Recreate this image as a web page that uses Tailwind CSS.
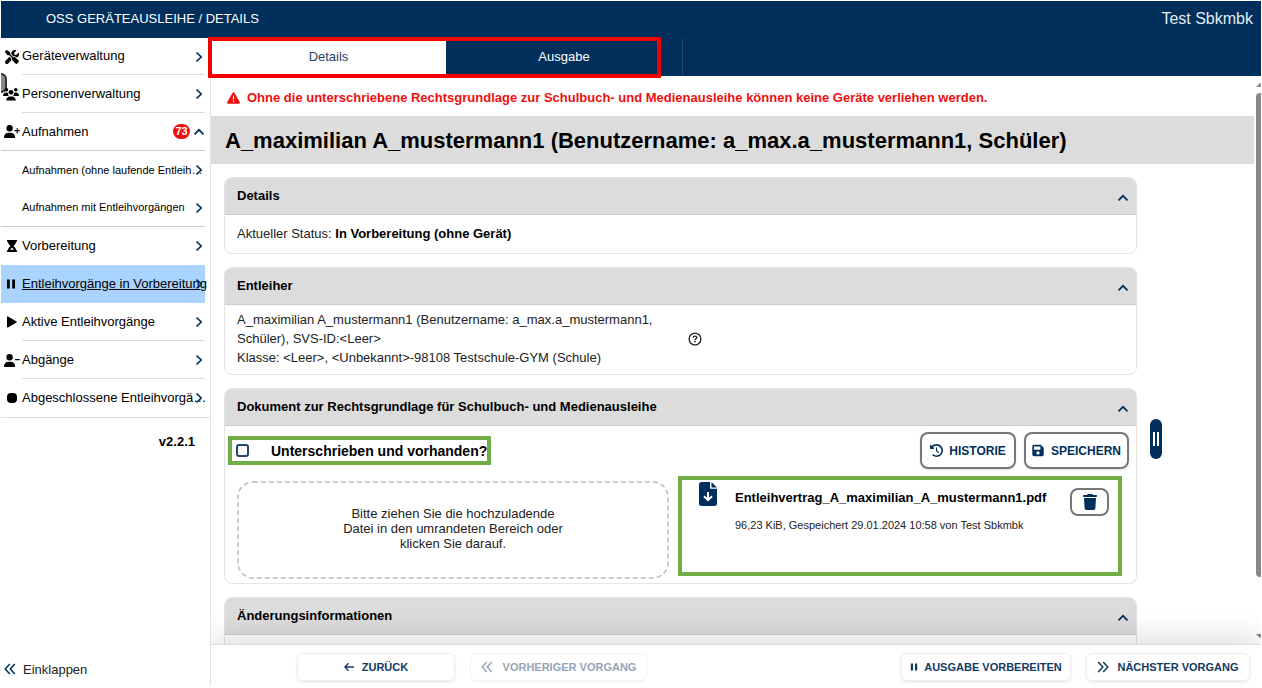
<!DOCTYPE html>
<html lang="de">
<head>
<meta charset="utf-8">
<title>OSS Geräteausleihe / Details</title>
<script src="https://cdn.jsdelivr.net/npm/@tailwindcss/browser@4"></script>
</head>
<body class="h-screen overflow-hidden bg-white px-px pt-px pb-0.5 font-['Liberation_Sans',Arial,sans-serif] text-[13px] text-[#222]">
<svg class="hidden" aria-hidden="true">
  <symbol id="chev-r" viewBox="0 0 12 12"><path d="M3.500 1.500 8.200 6l-4.700 4.500" fill="none" stroke="currentColor" stroke-width="1.700"/></symbol>
  <symbol id="chev-u" viewBox="0 0 12 12"><path d="M1.500 8.300 6 3.800l4.500 4.500" fill="none" stroke="currentColor" stroke-width="1.700"/></symbol>
  <symbol id="dbl-l" viewBox="0 0 12 12"><path d="M5.800 1 1.200 6l4.600 5M10.800 1 6.200 6l4.600 5" fill="none" stroke="currentColor" stroke-width="1.500"/></symbol>
  <symbol id="dbl-r" viewBox="0 0 12 12"><path d="M1.200 1 5.800 6l-4.600 5M6.200 1l4.600 5-4.600 5" fill="none" stroke="currentColor" stroke-width="1.500"/></symbol>
  <symbol id="pause" viewBox="0 0 10 10"><path d="M1 0.500h2.800v9H1zM6.200 0.500H9v9H6.200z" fill="currentColor"/></symbol>
</svg>
<div class="flex h-full flex-col">
  <header class="flex h-[37px] shrink-0 items-center justify-between bg-[#002f5b] pr-2 pb-0.5 pl-[45px] text-white">
    <span>OSS GERÄTEAUSLEIHE / DETAILS</span>
    <span class="text-base text-[#e4ecf4]">Test Sbkmbk</span>
  </header>
  <div class="flex min-h-0 flex-1">
    <aside class="relative flex w-[210px] shrink-0 flex-col border-r border-[#e2e2e2]">
      <span class="absolute top-[35px] left-0 h-5 w-1.5 rounded-r-full border-2 border-l-0 border-[#333] bg-[#888]"></span>
      <nav class="flex flex-col text-black [&>a]:relative [&>a]:flex [&>a]:h-[38px] [&>a]:w-[204px] [&>a]:shrink-0 [&>a]:items-center [&>a:first-child]:h-[37px]">
        <a href="#">
          <svg class="ml-1 size-3.5 shrink-0" viewBox="0 0 512 512"><path d="M78.600 5C69.100-2.400 55.600-1.500 47 7L7 47c-8.500 8.500-9.400 22-2.100 31.600l80 104c4.500 5.900 11.600 9.400 19 9.400h54.100l109 109c-14.700 29-10 65.400 14.300 89.600l112 112c12.500 12.500 32.800 12.500 45.300 0l64-64c12.500-12.500 12.500-32.800 0-45.300l-112-112c-24.200-24.200-60.600-29-89.600-14.300l-109-109V104c0-7.500-3.500-14.500-9.400-19L78.600 5zM19.900 396.100C7.200 408.800 0 426.100 0 444.100C0 481.600 30.400 512 67.900 512c18 0 35.300-7.200 48-19.900L233.700 374.300c-7.800-20.900-9-43.600-3.600-65.100l-61.700-61.700L19.900 396.100zM512 144c0-10.500-1.100-20.700-3.200-30.500c-2.400-11.200-16.100-14.100-24.200-6l-63.900 63.900c-3 3-7.100 4.700-11.300 4.700H352c-8.800 0-16-7.200-16-16V102.600c0-4.200 1.700-8.300 4.700-11.300l63.900-63.900c8.100-8.100 5.200-21.800-6-24.200C388.700 1.100 378.500 0 368 0C288.500 0 224 64.500 224 144l0 .8 85.300 85.300c36-9.100 75.800 .5 104 28.700L429 274.500c49-23 83-72.800 83-130.500z"/></svg>
          <span class="ml-[3px] flex h-full w-[183px] items-center border-b border-[#ddd]">Geräteverwaltung</span>
          <svg class="absolute right-0 size-3 text-[#002f5b]"><use href="#chev-r"/></svg>
        </a>
        <a href="#">
          <svg class="ml-0.5 h-3.5 w-4 shrink-0" viewBox="0 0 16 14"><circle cx="3.500" cy="2.800" r="1.800"/><circle cx="12.800" cy="2.800" r="1.800"/><circle cx="8" cy="5.300" r="2.400"/><path d="M0 8.800c0-2 1.500-3.300 3.200-3.300 1 0 1.700.300 2 .7-.4 1 .1 2.100.8 2.800H.3zM16 8.800c0-2-1.500-3.300-3.200-3.300-1 0-1.700.3-2 .7.400 1-.1 2.100-.8 2.800h5.700zM3.200 13.600c0-2.600 1.600-4.200 3.600-4.200h2.400c2 0 3.600 1.600 3.600 4.200z"/></svg>
          <span class="ml-[3px] flex h-full w-[183px] items-center border-b border-[#ddd]">Personenverwaltung</span>
          <svg class="absolute right-0 size-3 text-[#002f5b]"><use href="#chev-r"/></svg>
        </a>
        <a href="#" class="border-b border-[#ccc]">
          <svg class="ml-[3px] h-[13px] w-4 shrink-0" viewBox="0 0 640 512"><path d="M96 128a128 128 0 1 1 256 0A128 128 0 1 1 96 128zM0 482.300C0 383.800 79.800 304 178.300 304h91.400C368.200 304 448 383.800 448 482.300c0 16.400-13.300 29.700-29.700 29.700H29.700C13.300 512 0 498.700 0 482.300zM504 312V248H440c-13.300 0-24-10.700-24-24s10.700-24 24-24h64V136c0-13.300 10.700-24 24-24s24 10.700 24 24v64h64c13.300 0 24 10.700 24 24s-10.700 24-24 24H552v64c0 13.300-10.700 24-24 24s-24-10.700-24-24z"/></svg>
          <span class="ml-0.5 flex-1">Aufnahmen</span>
          <span class="mr-[15px] flex h-[15px] w-[17px] items-center justify-center rounded-full bg-[#f20d0d] text-[11px] font-bold text-white">73</span>
          <svg class="absolute right-0 size-3 text-[#002f5b]"><use href="#chev-u"/></svg>
        </a>
        <a href="#">
          <span class="ml-[21px] text-[11px] whitespace-nowrap">Aufnahmen (ohne laufende Entleih…</span>
          <svg class="absolute right-0 size-3 text-[#002f5b]"><use href="#chev-r"/></svg>
        </a>
        <a href="#" class="border-b border-[#ccc]">
          <span class="ml-[21px] text-[11px] whitespace-nowrap">Aufnahmen mit Entleihvorgängen</span>
          <svg class="absolute right-0 size-3 text-[#002f5b]"><use href="#chev-r"/></svg>
        </a>
        <a href="#">
          <svg class="ml-[5px] size-3 shrink-0" viewBox="0 0 12 12"><path d="M1 0h10v1.800H10C10 4 8.500 5 7.400 6 8.500 7 10 8 10 10.200h1V12H1v-1.800h1C2 8 3.500 7 4.600 6 3.500 5 2 4 2 1.800H1z"/><path d="M4 9.800 6 7.500l2 2.300z" fill="#fff"/></svg>
          <span class="ml-1">Vorbereitung</span>
          <svg class="absolute right-0 size-3 text-[#002f5b]"><use href="#chev-r"/></svg>
        </a>
        <a href="#" aria-current="page" class="bg-[#a9d4ff]">
          <svg class="ml-[5px] mr-1.5 size-2.5 shrink-0"><use href="#pause"/></svg>
          <span class="whitespace-nowrap underline">Entleihvorgänge in Vorbereitung</span>
          <svg class="absolute right-0 size-3 text-[#002f5b]"><use href="#chev-r"/></svg>
        </a>
        <a href="#">
          <svg class="ml-[5px] size-3 shrink-0" viewBox="0 0 12 12"><path d="M1 .9C1 .4 1.500.2 2 .5l8.500 5c.5.300.5.700 0 1L2 11.500c-.5.300-1 0-1-.4z"/></svg>
          <span class="ml-1 flex h-full w-[183px] items-center border-b border-[#ddd]">Aktive Entleihvorgänge</span>
          <svg class="absolute right-0 size-3 text-[#002f5b]"><use href="#chev-r"/></svg>
        </a>
        <a href="#">
          <svg class="ml-[3px] h-[13px] w-4 shrink-0" viewBox="0 0 640 512"><path d="M96 128a128 128 0 1 1 256 0A128 128 0 1 1 96 128zM0 482.300C0 383.800 79.800 304 178.300 304h91.400C368.200 304 448 383.800 448 482.300c0 16.400-13.300 29.700-29.700 29.700H29.700C13.300 512 0 498.700 0 482.300zM460 200h150a24 24 0 0 1 0 50H460a24 24 0 0 1 0-50z"/></svg>
          <span class="ml-0.5 flex h-full w-[183px] items-center border-b border-[#ddd]">Abgänge</span>
          <svg class="absolute right-0 size-3 text-[#002f5b]"><use href="#chev-r"/></svg>
        </a>
        <a href="#">
          <span class="ml-1.5 size-2.5 shrink-0 rounded-sm bg-black"></span>
          <span class="ml-[5px] whitespace-nowrap">Abgeschlossene Entleihvorgä…</span>
          <svg class="absolute right-0 size-3 text-[#002f5b]"><use href="#chev-r"/></svg>
        </a>
      </nav>
      <p class="border-t border-[#ddd] pt-3.5 pr-[15px] text-right font-bold text-black">v2.2.1</p>
      <button type="button" class="mt-auto mb-[7px] flex items-center gap-[7px] pl-[3px]"><svg class="size-3 text-[#002f5b]"><use href="#dbl-l"/></svg>Einklappen</button>
    </aside>

    <main class="flex min-w-0 flex-1 flex-col">
      <nav class="relative flex h-[38px] shrink-0 bg-[#002f5b]">
        <a href="#" aria-current="page" class="flex w-[235px] items-center justify-center bg-white text-[#23456b]">Details</a>
        <a href="#" class="flex w-[237px] items-center justify-center border-r border-[#1d4770] text-white">Ausgabe</a>
        <span class="pointer-events-none absolute -top-px -left-[3px] h-[41px] w-[453px] border-4 border-[#f40000]"></span>
      </nav>
      <div class="flex min-h-0 flex-1">
        <div class="min-w-0 flex-1 overflow-hidden">
          <p class="flex h-10 items-center gap-[7px] pt-1 pl-4 font-bold text-[#ee0f0f]">
            <svg class="h-3.5 w-[13px]" viewBox="0 0 512 512" fill="currentColor"><path d="M256 32c14.200 0 27.300 7.500 34.500 19.800l216 368c7.300 12.400 7.300 27.700 .2 40.100S486.300 480 472 480H40c-14.300 0-27.600-7.700-34.700-20.100s-7-27.800 .2-40.100l216-368C228.700 39.500 241.800 32 256 32zm0 128c-13.300 0-24 10.700-24 24V296c0 13.300 10.700 24 24 24s24-10.700 24-24V184c0-13.300-10.700-24-24-24zm32 224a32 32 0 1 0 -64 0 32 32 0 1 0 64 0z"/></svg>
            Ohne die unterschriebene Rechtsgrundlage zur Schulbuch- und Medienausleihe können keine Geräte verliehen werden.
          </p>
          <h1 class="flex h-12 items-center bg-[#dcdcdc] pl-3.5 text-[22px] font-bold whitespace-nowrap text-black">A_maximilian A_mustermann1 (Benutzername: a_max.a_mustermann1, Schüler)</h1>
          <div class="flex gap-[13px] pt-[13px] pl-[13px]">
            <div class="flex min-w-0 flex-1 flex-col gap-[13px]">
              <section class="overflow-hidden rounded-lg border border-[#e3e3e3]">
                <h2 class="flex h-[37px] items-center justify-between border-b border-[#ccc] bg-[#dcdcdc] pr-[7px] pl-3 font-bold text-black">Details <button type="button" aria-label="Details einklappen" class="pt-1 text-[#002f5b]"><svg class="size-3"><use href="#chev-u"/></svg></button></h2>
                <p class="flex h-[38px] items-center pl-3">Aktueller Status:&nbsp;<b class="text-black">In Vorbereitung (ohne Gerät)</b></p>
              </section>
              <section class="overflow-hidden rounded-lg border border-[#e3e3e3]">
                <h2 class="flex h-[37px] items-center justify-between border-b border-[#ccc] bg-[#dcdcdc] pr-[7px] pl-3 font-bold text-black">Entleiher <button type="button" aria-label="Entleiher einklappen" class="pt-1 text-[#002f5b]"><svg class="size-3"><use href="#chev-u"/></svg></button></h2>
                <div class="flex items-center gap-[31px] pt-[5px] pb-[7px] pl-3 leading-[19px]">
                  <p class="w-[420px]">A_maximilian A_mustermann1 (Benutzername: a_max.a_mustermann1, Schüler), SVS-ID:&lt;Leer&gt;<br>Klasse: &lt;Leer&gt;, &lt;Unbekannt&gt;-98108 Testschule-GYM (Schule)</p>
                  <button type="button" aria-label="Hilfe"><svg class="size-3.5" viewBox="0 0 14 14" fill="none" stroke="#222"><circle cx="7" cy="7" r="5.900" stroke-width="1.300"/><path d="M5.200 5.700c0-1 .8-1.600 1.800-1.600s1.800.6 1.800 1.500c0 1.100-1.700 1.200-1.700 2.300" stroke-width="1.400"/><path d="M6.300 9.500h1.500" stroke-width="1.400"/></svg></button>
                </div>
              </section>
              <section class="overflow-hidden rounded-lg border border-[#e3e3e3]">
                <h2 class="flex h-[37px] items-center justify-between border-b border-[#ccc] bg-[#dcdcdc] pr-[7px] pl-3 font-bold text-black">Dokument zur Rechtsgrundlage für Schulbuch- und Medienausleihe <button type="button" aria-label="Dokument einklappen" class="pt-1 text-[#002f5b]"><svg class="size-3"><use href="#chev-u"/></svg></button></h2>
                <div class="flex items-center gap-2 pt-1.5 pr-[7px] pl-[3px]">
                  <label class="mr-auto flex h-[29px] w-[263px] items-center gap-[22px] border-4 border-[#70ad47] pl-1 text-sm font-bold whitespace-nowrap text-black">
                    <input type="checkbox" class="size-[13px] shrink-0 appearance-none rounded-[3px] border-2 border-[#24466c] bg-white">Unterschrieben und vorhanden?
                  </label>
                  <button type="button" class="flex h-[37px] w-24 items-center justify-center gap-1.5 rounded-lg border-2 border-[#777] text-xs font-bold text-[#002f5b] shadow-sm"><svg class="size-[13px]" viewBox="0 0 512 512" fill="currentColor"><path d="M75 75L41 41C25.900 25.900 0 36.600 0 57.900V168c0 13.300 10.700 24 24 24H134.100c21.400 0 32.100-25.900 17-41l-30.800-30.800C155 85.500 203 64 256 64c106 0 192 86 192 192s-86 192-192 192c-40.800 0-78.600-12.700-109.700-34.400c-14.500-10.100-34.400-6.600-44.600 7.900s-6.600 34.400 7.900 44.600C151.200 495 201.700 512 256 512c141.400 0 256-114.600 256-256S397.400 0 256 0C185.300 0 121.300 28.700 75 75zm181 53c-13.300 0-24 10.700-24 24V256c0 6.400 2.500 12.500 7 17l72 72c9.400 9.400 24.600 9.400 33.900 0s9.400-24.600 0-33.900l-65-65V152c0-13.300-10.700-24-24-24z"/></svg>HISTORIE</button>
                  <button type="button" class="flex h-[37px] w-[105px] items-center justify-center gap-[7px] rounded-lg border-2 border-[#777] text-xs font-bold text-[#002f5b] shadow-sm"><svg class="h-[13px] w-3" viewBox="0 0 448 512" fill="currentColor" fill-rule="evenodd"><path d="M433.100 129.100l-83.900-83.900C342.300 38.300 327.100 32 316.100 32H64C28.700 32 0 60.700 0 96v320c0 35.300 28.700 64 64 64h320c35.300 0 64-28.700 64-64V163.900C448 152.900 441.700 137.700 433.100 129.100zM224 416c-35.300 0-64-28.700-64-64s28.700-64 64-64 64 28.700 64 64S259.300 416 224 416zM320 208c0 8.800-7.200 16-16 16H80c-8.800 0-16-7.200-16-16V112c0-8.800 7.200-16 16-16h224c8.800 0 16 7.200 16 16V208z"/></svg>SPEICHERN</button>
                </div>
                <div class="flex gap-[9px] pt-[7px] pr-[14px] pb-1 pl-3">
                  <button type="button" class="relative mt-[5px] flex h-[98px] w-[432px] shrink-0 items-center justify-center text-center leading-[15px]">
                    <svg class="absolute inset-0 size-full" fill="none"><rect x="1" y="1" width="430" height="96" rx="15" stroke="#bdbdbd" stroke-width="1.500" stroke-dasharray="5 3"/></svg>
                    <span class="pb-1">Bitte ziehen Sie die hochzuladende<br>Datei in den umrandeten Bereich oder<br>klicken Sie darauf.</span>
                  </button>
                  <div class="flex h-[100px] min-w-0 flex-1 items-start border-4 border-[#70ad47] pr-[9px] pl-[17px]">
                    <svg class="mt-0.5 h-6 w-[18px] shrink-0" viewBox="0 0 18 24"><path d="M2.500 0H11v5.500c0 .8.500 1.300 1.300 1.300H18v14.700c0 1.400-1.100 2.500-2.500 2.500h-13C1.100 24 0 22.900 0 21.500v-19C0 1.100 1.100 0 2.500 0zM12.500 0 18 5.400h-5.500z" fill="#002f5b"/><path d="M9 10v7.500M5 14.200l4 4 4-4" fill="none" stroke="#fff" stroke-width="2"/></svg>
                    <div class="ml-[18px] min-w-0 flex-1 pt-2.5">
                      <p class="leading-4 font-bold whitespace-nowrap text-black">Entleihvertrag_A_maximilian_A_mustermann1.pdf</p>
                      <p class="mt-[11px] text-[11px] leading-4 whitespace-nowrap">96,23 KiB, Gespeichert 29.01.2024 10:58 von Test Sbkmbk</p>
                    </div>
                    <button type="button" aria-label="Löschen" class="mt-2 flex h-7 w-[39px] items-center justify-center rounded-lg border-2 border-[#777] text-[#002f5b]"><svg class="h-4 w-3.5" viewBox="0 0 448 512" fill="currentColor"><path d="M135.200 17.700L128 32H32C14.300 32 0 46.300 0 64S14.300 96 32 96H416c17.700 0 32-14.300 32-32s-14.300-32-32-32H320l-7.200-14.300C307.400 6.800 296.300 0 284.200 0H163.800c-12.100 0-23.200 6.800-28.600 17.700zM416 128H32L53.200 467c1.600 25.300 22.600 45 47.900 45H346.900c25.300 0 46.300-19.700 47.900-45L416 128z"/></svg></button>
                  </div>
                </div>
              </section>
              <section class="overflow-hidden rounded-lg border border-[#e3e3e3]">
                <h2 class="flex h-[37px] items-center justify-between border-b border-[#ccc] bg-[#dcdcdc] pr-[7px] pl-3 font-bold text-black">Änderungsinformationen <button type="button" aria-label="Änderungsinformationen einklappen" class="pt-1 text-[#002f5b]"><svg class="size-3"><use href="#chev-u"/></svg></button></h2>
                <div class="h-20"></div>
              </section>
            </div>
            <div class="w-[104px] pt-[242px]">
              <button type="button" aria-label="Seitenleiste" class="flex h-10 w-3 items-center justify-center gap-0.5 rounded-full bg-[#002f5b]"><span class="h-3.5 w-0.5 bg-white"></span><span class="h-3.5 w-0.5 bg-white"></span></button>
            </div>
          </div>
        </div>
        <div class="ml-0.5 flex w-[5px] shrink-0 flex-col overflow-hidden pt-[7px] pb-1.5">
          <svg class="h-1 w-[5px]" viewBox="0 0 5 4"><path d="M0 4 4 0l4 4z" fill="#888"/></svg>
          <div class="mt-1.5 h-[484px] w-2 rounded-full bg-[#888]"></div>
          <svg class="mt-auto h-1 w-[5px]" viewBox="0 0 5 4"><path d="M0 0h8L4 4z" fill="#888"/></svg>
        </div>
      </div>
      <footer class="relative flex h-[42px] shrink-0 items-center gap-[15px] border-t border-[#ddd] bg-white pt-[3px] pr-[11px] pl-[86px] text-[11px] font-bold text-[#123a63] shadow-[0_-6px_30px_rgba(0,0,0,0.14)] [clip-path:inset(-50px_0_0_0)]">
        <button type="button" class="flex h-7 w-[158px] items-center justify-center gap-2 rounded-md border border-[#eee] shadow-sm"><svg class="size-2.5" viewBox="0 0 10 10"><path d="M10 5H1M4.500 1.300.9 5l3.600 3.700" fill="none" stroke="currentColor" stroke-width="1.400"/></svg>ZURÜCK</button>
        <button type="button" disabled class="mr-auto flex h-7 w-[177px] items-center justify-center gap-2.5 rounded-md border border-[#f3f3f3] text-[#93a5b8] shadow-xs"><svg class="size-3"><use href="#dbl-l"/></svg>VORHERIGER VORGANG</button>
        <button type="button" class="flex h-7 w-[170px] items-center justify-center gap-1.5 rounded-md border border-[#eee] shadow-sm"><svg class="size-2"><use href="#pause"/></svg>AUSGABE VORBEREITEN</button>
        <button type="button" class="flex h-7 w-[164px] items-center justify-center gap-2 rounded-md border border-[#eee] shadow-sm"><svg class="size-3"><use href="#dbl-r"/></svg>NÄCHSTER VORGANG</button>
      </footer>
    </main>
  </div>
</div>
</body>
</html>
